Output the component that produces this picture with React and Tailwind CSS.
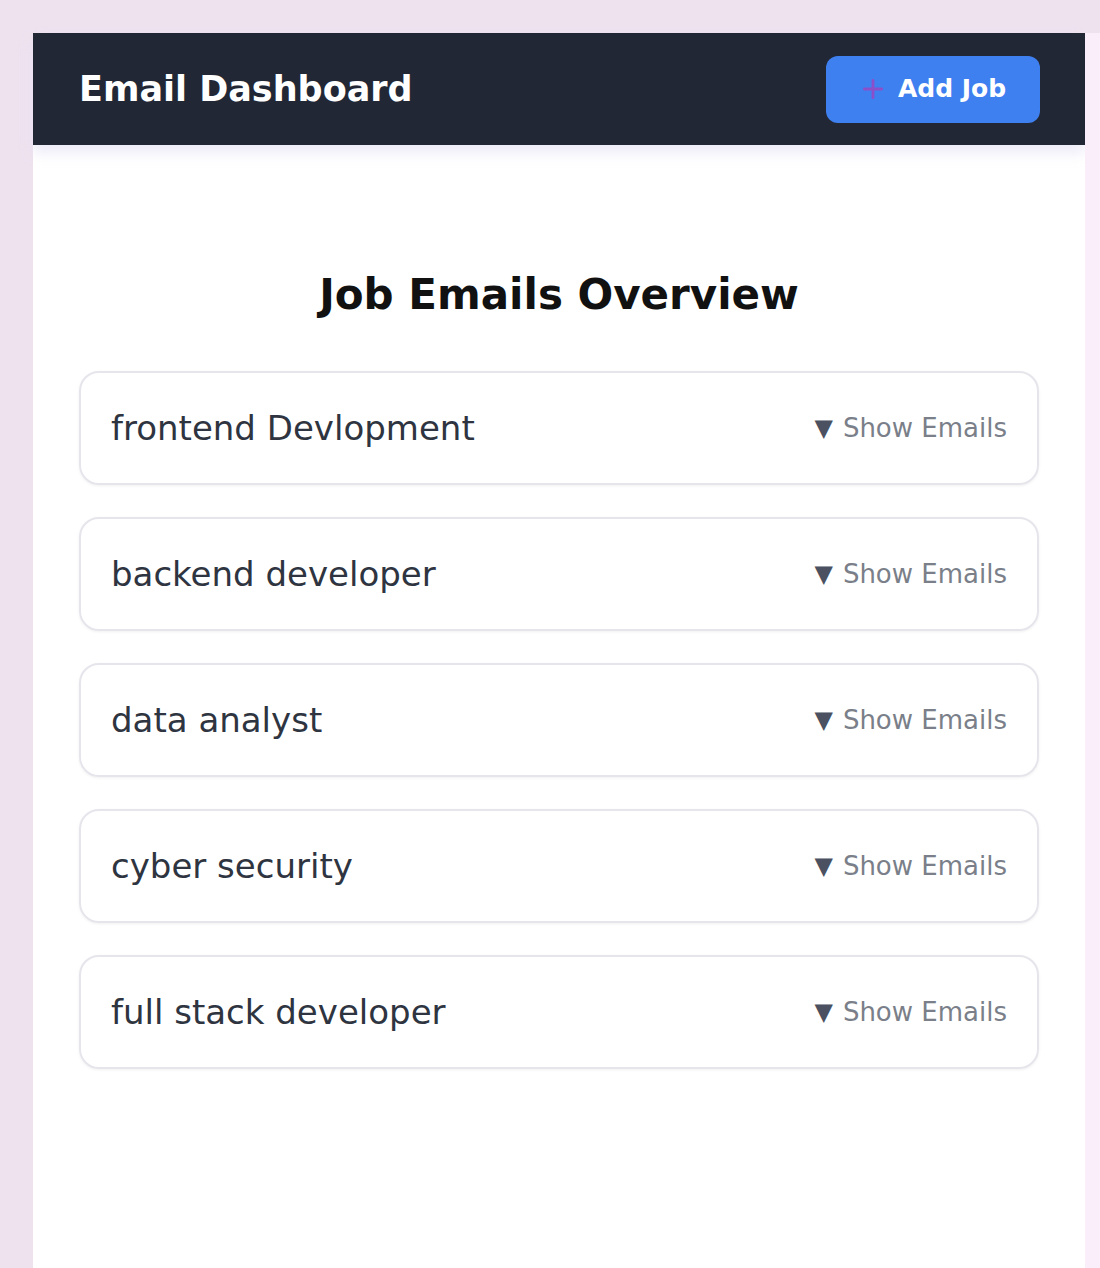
import React from 'react';

const jobs = [
    'frontend Devlopment',
    'backend developer',
    'data analyst',
    'cyber security',
    'full stack developer'
];

const font = { fontFamily: '"DejaVu Sans", "Noto Sans", sans-serif' };

function PlusIcon() {
    return (
        <svg width="26" height="26" viewBox="0 0 24 24" fill="none">
            <path d="M12 4v16M4 12h16" stroke="#8b4fc9" strokeWidth="2.6" strokeLinecap="round" />
        </svg>
    );
}

export default function App() {
    return (
        <div className="min-h-[1268px] flex bg-[#efe2ef] pt-[33px] pl-[33px]" style={font}>
            <div className="w-[1052px] min-h-[1235px] bg-white flex flex-col">
                {/* Header */}
                <div className="h-[112px] bg-[#222736] flex items-center justify-between pl-[46px] pr-[45px] shadow-[0_8px_12px_rgba(230,226,245,0.7)]">
                    <h1 className="text-white text-[35px] font-bold">Email Dashboard</h1>
                    <button className="w-[214px] h-[67px] rounded-[12px] bg-[#3f80f1] flex items-center justify-center gap-[12px] text-white text-[25px] font-semibold">
                        <PlusIcon />
                        <span>Add Job</span>
                    </button>
                </div>

                {/* Content */}
                <div className="px-[46px] pt-[129px] pb-10">
                    <h2 className="text-center text-[42px] font-bold text-[#111] leading-none">Job Emails Overview</h2>
                    <div className="mt-[55px] flex flex-col gap-[32px]">
                        {jobs.map(job => (
                            <div
                                key={job}
                                className="h-[114px] rounded-[20px] border-2 border-[#e6e5eb] shadow-[0_1px_3px_rgba(0,0,0,0.06)] flex items-center justify-between px-[30px]"
                            >
                                <span className="text-[34px] text-[#2e3440]">{job}</span>
                                <span className="text-[26px] text-[#7a7f89] flex items-center gap-[10px]">
                                    <span className="text-[#4b5160] text-[24px]">▼</span>
                                    Show Emails
                                </span>
                            </div>
                        ))}
                    </div>
                </div>
            </div>
            <div className="flex-1 bg-[#f9eefa]" />
        </div>
    );
}
